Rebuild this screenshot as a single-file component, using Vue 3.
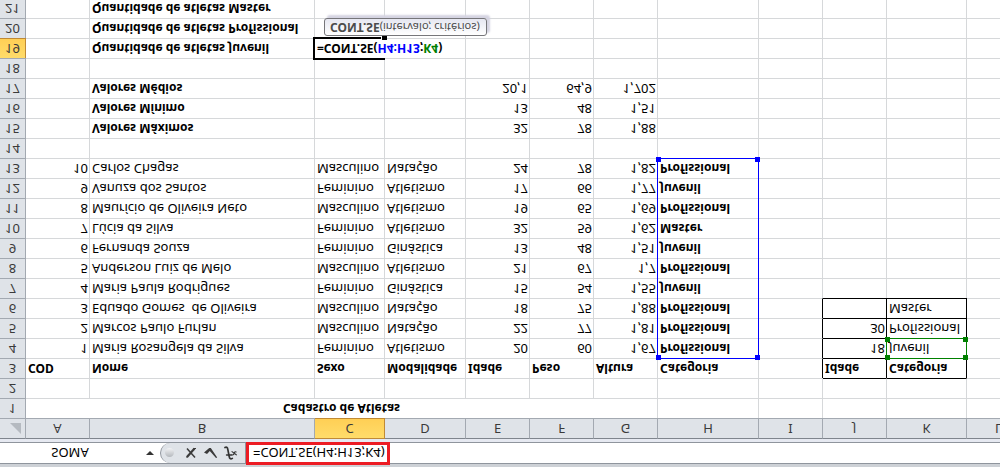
<script setup>
import { ref } from 'vue'

const cellName = ref('SOMA')
const formula = ref('=CONT.SE(H4:H13;K4)')

const columns = ['A', 'B', 'C', 'D', 'E', 'F', 'G', 'H', 'I', 'J', 'K', 'L']

const athletes = [
  ['Maria Rosangela da Silva', 'Feminino', 'Atletismo', '20', '60', '1,67', 'Profissional'],
  ['Marcos Paulo Furlan', 'Masculino', 'Natação', '22', '77', '1,81', 'Profissional'],
  ['Eduado Gomes  de Oliveira', 'Masculino', 'Natação', '18', '75', '1,88', 'Profissional'],
  ['Maria Paula Rodrigues', 'Feminino', 'Ginástica', '15', '54', '1,55', 'Juvenil'],
  ['Anderson Luiz de Melo', 'Masculino', 'Atletismo', '21', '67', '1,7', 'Profissional'],
  ['Fernanda Souza', 'Feminino', 'Ginástica', '13', '48', '1,51', 'Juvenil'],
  ['Lúcia da Silva', 'Feminino', 'Atletismo', '32', '59', '1,62', 'Master'],
  ['Maurício de Oliveira Neto', 'Masculino', 'Atletismo', '19', '65', '1,69', 'Profissional'],
  ['Vanuza dos Santos', 'Feminino', 'Atletismo', '17', '66', '1,77', 'Juvenil'],
  ['Carlos Chagas', 'Masculino', 'Natação', '24', '78', '1,82', 'Profissional']
]

const values = {
  A3: 'COD', B3: 'Nome', C3: 'Sexo', D3: 'Modalidade', E3: 'Idade', F3: 'Peso', G3: 'Altura', H3: 'Categoria',
  J3: 'Idade', K3: 'Categoria', J4: '18', K4: 'Juvenil', J5: '30', K5: 'Profissional', K6: 'Master',
  B15: 'Valores Máximos', E15: '32', F15: '78', G15: '1,88',
  B16: 'Valores Mínimo', E16: '13', F16: '48', G16: '1,51',
  B17: 'Valores Médios', E17: '20,1', F17: '64,9', G17: '1,702',
  B19: 'Quantidade de atletas Juvenil',
  B20: 'Quantidade de atletas Profissional',
  B21: 'Quantidade de atletas Master'
}

athletes.forEach((athlete, i) => {
  values['A' + (i + 4)] = String(i + 1)
  athlete.forEach((text, c) => {
    values['BCDEFGH'[c] + (i + 4)] = text
  })
})

const rows = Array.from({ length: 20 }, (_, i) => i + 2)

function cellClass(col, row) {
  const text = values[col + row] || ''
  return {
    num: /^[\d,]+$/.test(text),
    bold: row === 3 || (col === 'H' && row > 3) || (col === 'B' && row > 14),
    'line-right': 'IJK'.includes(col) && row >= 3 && row <= 6,
    'line-bottom': 'JK'.includes(col) && row >= 2 && row <= 6
  }
}
</script>

<template>
  <main class="sheet">
    <header class="bar">
      <div class="name">
        <input v-model="cellName" class="name-input" type="text" aria-label="Caixa de nome">
        <button class="drop" type="button" aria-label="Abrir lista de nomes">
          <svg width="8" height="4" viewBox="0 0 8 4"><path d="M0 0h8L4 4z" fill="#333" /></svg>
        </button>
      </div>
      <div class="tools">
        <span class="knob"></span>
        <button type="button" aria-label="Cancelar">
          <svg width="12" height="12" viewBox="0 0 12 12" fill="none" stroke="#3b3b3b">
            <path d="M2 2l7.5 8.5" stroke-width="2.2" /><path d="M10 1.5L2 10.5" stroke-width="1.5" />
            <path d="M1 2h2M8.5 10.5H11" stroke-width="1.2" />
          </svg>
        </button>
        <button type="button" aria-label="Inserir">
          <svg width="14" height="12" viewBox="0 0 14 12">
            <path d="M0 6.500L3 5l2.800 3L12 1l1.200.6L6.800 11H5.200z" fill="#3b3b3b" />
          </svg>
        </button>
        <button type="button" aria-label="Inserir função">
          <svg width="14" height="14" viewBox="0 0 14 14" fill="none" stroke="#333" stroke-linecap="round">
            <path d="M8.300 1.600C6.500.4 5.600 1.500 5.200 3.500L3.900 10.200C3.500 12.500 2.700 13.400 1 12.500" stroke-width="1.7" />
            <path d="M2.500 5h5" stroke-width="1.300" />
            <path d="M8 5.200c1.500-.6 1.800.4 2.200 1.600s.8 1.700 1.900 1.200M12.300 5.200L8 8.400" stroke-width="1.100" />
          </svg>
        </button>
      </div>
      <div class="formula">
        <input v-model="formula" class="formula-input" type="text" aria-label="Barra de fórmulas">
      </div>
    </header>

    <table>
      <colgroup>
        <col class="w-head"><col class="w-64"><col class="w-b"><col class="w-c"><col class="w-d">
        <col class="w-64"><col class="w-64"><col class="w-64"><col class="w-h"><col class="w-64">
        <col class="w-64"><col class="w-k"><col>
      </colgroup>
      <thead>
        <tr>
          <th class="corner">
            <svg width="11" height="11" viewBox="0 0 11 11"><path d="M11 0v11H0z" fill="#b5bac0" /></svg>
          </th>
          <th v-for="col in columns" :key="col" scope="col" :class="{ active: col === 'C' }">{{ col }}</th>
        </tr>
      </thead>
      <tbody>
        <tr>
          <th scope="row">1</th>
          <td colspan="7" class="bold title">Cadastro de Atletas</td>
          <td v-for="n in 5" :key="n"></td>
        </tr>
        <tr v-for="row in rows" :key="row">
          <th scope="row" :class="{ active: row === 19 }">{{ row }}</th>
          <td v-for="col in columns" :key="col" :class="cellClass(col, row)"><span>{{ values[col + row] }}</span>
            <div v-if="col + row === 'H4'" class="range blue"><i></i><i></i><i></i><i></i></div>
            <div v-if="col + row === 'K4'" class="range green"><i></i><i></i><i></i><i></i></div>
            <template v-if="col + row === 'C19'">
              <div class="outline"></div>
              <div class="edit">=CONT.SE(<span class="ref-blue">H4:H13</span>;<span class="ref-green">K4</span>)</div>
              <div class="handle"></div>
              <div class="hint" role="tooltip"><b>CONT.SE</b>(intervalo; critérios)</div>
            </template>
          </td>
        </tr>
      </tbody>
    </table>
  </main>
</template>

<style>
html,
body {
  margin: 0;
  overflow: hidden;
}
</style>

<style scoped>
.sheet {
  height: 100vh;
  overflow: hidden;
  background: #fff;
  color: #000;
  font: 13px/19px "Noto Sans", "Open Sans", sans-serif;
  transform: scaleY(-1);
}

.bar {
  display: flex;
  height: 20px;
  border-top: 1px solid #8f959d;
  border-bottom: 1px solid #8f959d;
  margin: 3px 0;
  background: #fff;
  box-shadow: 0 -3px #cdd1d6, 0 3px #e6e9f1;
}

.sheet::before {
  content: "";
  display: table;
}

.name {
  display: flex;
  width: 160px;
  align-items: center;
}

input {
  box-sizing: border-box;
  min-width: 0;
  height: 20px;
  padding: 0;
  border: 0;
  outline: 0;
  background: transparent;
  color: #000;
  font: inherit;
}

.name-input {
  flex: 1;
  text-align: center;
}

button {
  display: flex;
  align-items: center;
  justify-content: center;
  width: 20px;
  padding: 0;
  border: 0;
  background: transparent;
}

.tools {
  display: flex;
  box-sizing: border-box;
  width: 86px;
  padding-left: 4px;
  align-items: center;
  border: solid #8f959d;
  border-width: 0 1px;
  border-radius: 10px 0 0 10px;
  background: #dfe3e8;
}

.knob {
  width: 9px;
  height: 9px;
  margin-right: 7px;
  border-radius: 50%;
  background: linear-gradient(#b4b8bd, #f2f3f5);
}

.formula {
  position: relative;
  flex: 1;
}

.formula-input {
  position: absolute;
  top: -2px;
  left: 0;
  width: 144px;
  height: 23px;
  padding-left: 4px;
  border: 3px solid #ec1c24;
  background: #fff;
}

table {
  width: 100%;
  min-width: 1031px;
  table-layout: fixed;
  border-collapse: separate;
  border-spacing: 0;
}

.w-head { width: 26px; }
.w-64 { width: 64px; }
.w-b { width: 225px; }
.w-c { width: 70px; }
.w-d { width: 81px; }
.w-h { width: 101px; }
.w-k { width: 80px; }

th,
td {
  box-sizing: border-box;
  height: 20px;
  padding: 0 2px;
  border: solid #d6d8da;
  border-width: 0 1px 1px 0;
}

th {
  padding: 0;
  border-color: #a3a9b1;
  background: #dfe3e8;
  color: #3a3a3a;
  font-weight: 400;
  text-align: center;
}

thead th {
  height: 21px;
  border-top: 1px solid #7f858d;
}

th.active {
  border-color: #c08a35;
  background: linear-gradient(#ffdc6a, #ffcf55);
}

.corner svg {
  display: block;
  margin: 0 4px 0 auto;
}

td {
  position: relative;
  white-space: nowrap;
}

td > span {
  white-space: pre;
}

td.num {
  padding-right: 1px;
  text-align: right;
}

.bold,
.edit {
  font-size: 12px;
  font-weight: 700;
}

td.title {
  text-align: center;
}

.line-right { border-right-color: #000; }
.line-bottom { border-bottom-color: #000; }

.range {
  position: absolute;
  z-index: 1;
  top: -1px;
  left: -1px;
  box-sizing: border-box;
  width: calc(100% + 2px);
  height: calc(100% + 2px);
  border: 1px solid;
  pointer-events: none;
}

.blue { height: 201px; color: #00f; }
.green { color: #008000; }

.range i {
  position: absolute;
  width: 5px;
  height: 5px;
  background: currentColor;
}

.range i:nth-child(odd) { left: -2px; }
.range i:nth-child(even) { right: -2px; }
.range i:nth-child(-n + 2) { top: -2px; }
.range i:nth-child(n + 3) { bottom: -2px; }

.outline {
  position: absolute;
  z-index: 1;
  top: -2px;
  left: -2px;
  width: calc(100% + 1px);
  height: 19px;
  border: 2px solid #000;
  border-right: 0;
}

.edit {
  position: absolute;
  z-index: 2;
  top: 0;
  left: 0;
  width: 148px;
  height: 19px;
  padding-left: 2px;
  background: #fff;
}

.handle {
  position: absolute;
  z-index: 3;
  right: -3px;
  bottom: -3px;
  width: 5px;
  height: 4px;
  border: solid #fff;
  border-width: 1px 0 0 1px;
  background: #000;
}

.ref-blue { color: #00f; }
.ref-green { color: #008000; }

.hint {
  position: absolute;
  z-index: 2;
  top: 22px;
  left: 9px;
  padding: 0 6px 0 5px;
  border: 1px solid #76767a;
  border-radius: 3px;
  background: linear-gradient(#fff, #e6e7f1);
  box-shadow: 3px 3px 2px #d5d4e2;
  color: #4c4c4c;
  font-size: 11px;
  font-weight: 400;
  line-height: 16px;
}

.hint b {
  font-size: 12px;
}
</style>
